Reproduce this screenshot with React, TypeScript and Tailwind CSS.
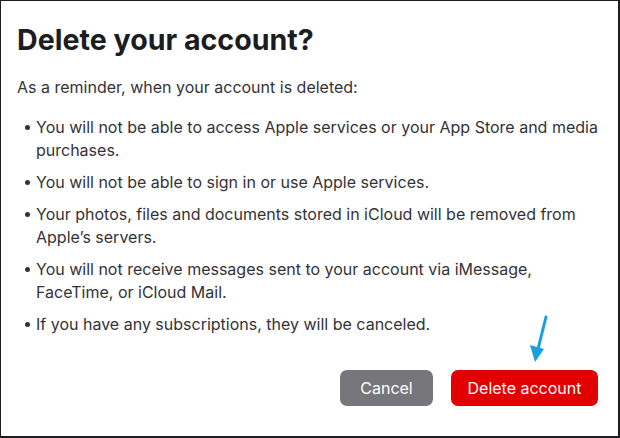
export default function App() {
  const items = [
    "You will not be able to access Apple services or your App Store and media purchases.",
    "You will not be able to sign in or use Apple services.",
    "Your photos, files and documents stored in iCloud will be removed from Apple\u2019s servers.",
    "You will not receive messages sent to your account via iMessage, FaceTime, or iCloud Mail.",
    "If you have any subscriptions, they will be canceled.",
  ];

  return (
    <div
      className="relative w-[620px] h-[438px] bg-white border border-[#1d1d1f] border-r-2 border-b-2 overflow-hidden text-[#333336]"
      style={{ fontFamily: "Inter, 'Liberation Sans', sans-serif" }}
    >
      <div className="pl-4 pr-5 pt-[19px]">
        <h1 className="text-[28.6px] leading-[40px] font-bold text-[#1d1d1f]">
          Delete your account?
        </h1>
        <p className="mt-[16px] text-[16px] leading-[23px]">
          As a reminder, when your account is deleted:
        </p>
        <ul className="mt-[17px] flex flex-col gap-[9px]">
          {items.map((t) => (
            <li key={t} className="flex text-[16px] leading-[23px]">
              <span className="w-[19px] shrink-0 flex items-center h-[23px] pl-[8px]">
                <span className="block w-[5px] h-[5px] rounded-full bg-[#333336]" />
              </span>
              <span className="max-w-[570px]">{t}</span>
            </li>
          ))}
        </ul>
        <div className="mt-[34px] flex justify-end gap-[18px]">
          <button className="h-[36px] w-[93px] rounded-[7px] bg-[#77767b] text-white text-[16px]">
            Cancel
          </button>
          <button className="h-[36px] w-[147px] rounded-[7px] bg-[#e30000] text-white text-[16px]">
            Delete account
          </button>
        </div>
      </div>
      <svg
        className="absolute left-[525px] top-[312px]"
        width="28"
        height="52"
        viewBox="0 0 28 52"
      >
        <path d="M20 4 L11 40" stroke="#1a9fe0" strokeWidth="3" strokeLinecap="round" fill="none" />
        <path d="M4 32 L9 49 L18 36 Z" fill="#1a9fe0" />
      </svg>
    </div>
  );
}
